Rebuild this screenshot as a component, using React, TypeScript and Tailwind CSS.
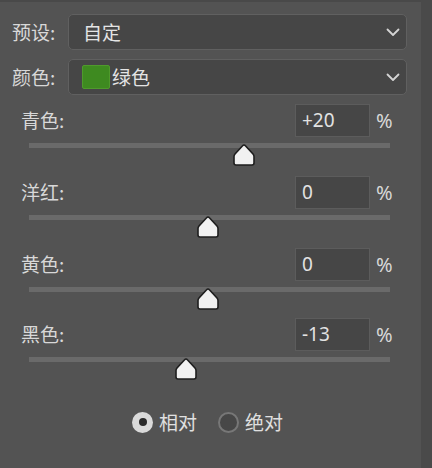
import React from 'react';

const font = { fontFamily: '"Noto Sans CJK SC", "Noto Sans", sans-serif' };

function Chevron() {
  return (
    <svg width="14" height="9" viewBox="0 0 14 9" className="shrink-0">
      <path d="M1.5 1.5 L7 7 L12.5 1.5" fill="none" stroke="#d4d4d4" strokeWidth="1.8" strokeLinecap="round" strokeLinejoin="round" />
    </svg>
  );
}

function Thumb({ left }: { left: number }) {
  return (
    <svg
      width="24"
      height="24"
      viewBox="0 0 24 24"
      className="absolute top-[0px]"
      style={{ left: left - 12 }}
    >
      <path
        d="M12 2 Q12.8 2 13.4 2.7 L21 11 Q22 12.2 22 13.6 L22 20 Q22 22 20 22 L4 22 Q2 22 2 20 L2 13.6 Q2 12.2 3 11 L10.6 2.7 Q11.2 2 12 2 Z"
        fill="#f1f1f1"
        stroke="#1e1e1e"
        strokeWidth="1.6"
      />
    </svg>
  );
}

function Dropdown({ children }: { children: React.ReactNode }) {
  return (
    <div className="flex h-[36px] flex-1 items-center justify-between rounded-[5px] border border-[#606060] bg-[#464646] pl-[14px] pr-[6px]">
      <div className="flex items-center">{children}</div>
      <Chevron />
    </div>
  );
}

function SliderRow({ label, value, pos }: { label: string; value: string; pos: number }) {
  return (
    <div>
      <div className="flex h-[33px] items-center">
        <span className="ml-[21px] w-[274px] text-[19px] text-[#d8d8d8]">{label}</span>
        <div className="flex h-[33px] w-[75px] items-center border border-[#5c5c5c] bg-[#464646] pl-[6px] text-[19px] text-[#e2e2e2]" style={{ fontFamily: '"Noto Sans", sans-serif' }}>
          {value}
        </div>
        <span className="ml-[6px] text-[20px] text-[#d8d8d8]" style={{ fontFamily: '"Noto Sans", sans-serif' }}>%</span>
      </div>
      <div className="relative ml-[29px] mt-[6px] h-[5px] w-[361px] bg-[#6a6a6a]">
        <Thumb left={pos} />
      </div>
    </div>
  );
}

export default function App() {
  return (
    <div className="flex h-[468px] w-[432px] overflow-hidden bg-[#535353]" style={font}>
      <div className="flex flex-1 flex-col border-t-2 border-[#494949]">
        <div className="mt-[12px] flex items-center pl-[12px] pr-[14px]">
          <span className="w-[56px] text-[19px] text-[#d8d8d8]">预设:</span>
          <Dropdown>
            <span className="text-[19px] text-[#e4e4e4]">自定</span>
          </Dropdown>
        </div>
        <div className="mt-[9px] flex items-center pl-[12px] pr-[14px]">
          <span className="w-[56px] text-[19px] text-[#d8d8d8]">颜色:</span>
          <Dropdown>
            <span className="-ml-[1px] h-[24px] w-[28px] rounded-[2px] border border-[#4f9a2c] bg-[#3e8a20]" />
            <span className="ml-[2px] text-[19px] text-[#e4e4e4]">绿色</span>
          </Dropdown>
        </div>
        <div className="mt-[9px] flex flex-col gap-[28px]">
          <SliderRow label="青色:" value="+20" pos={215} />
          <SliderRow label="洋红:" value="0" pos={179} />
          <SliderRow label="黄色:" value="0" pos={179} />
          <div className="-mt-[2px]">
            <SliderRow label="黑色:" value="-13" pos={157} />
          </div>
        </div>
        <div className="mt-[46px] flex items-center pl-[132px]">
          <span className="flex h-[21px] w-[21px] items-center justify-center rounded-full bg-[#dadada]">
            <span className="h-[8px] w-[8px] rounded-full bg-[#2a2a2a]" />
          </span>
          <span className="ml-[6px] text-[19px] text-[#e0e0e0]">相对</span>
          <span className="ml-[21px] h-[21px] w-[21px] rounded-full border-2 border-[#777777] bg-[#474747]" />
          <span className="ml-[6px] text-[19px] text-[#e0e0e0]">绝对</span>
        </div>
      </div>
      <div className="w-[11px] bg-[#4a4a4a]" />
    </div>
  );
}
